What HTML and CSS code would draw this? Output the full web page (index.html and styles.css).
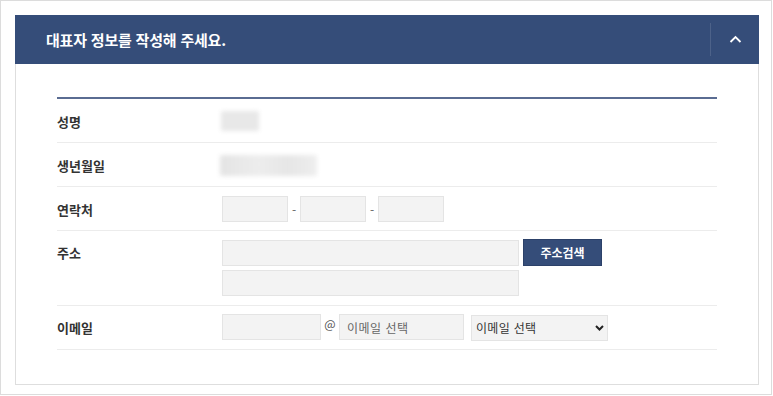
FILE: index.html
```html
<!doctype html>
<html lang="ko">
<head>
<meta charset="utf-8">
<title>대표자 정보</title>
<link rel="stylesheet" href="styles.css">
</head>
<body>
  <div class="frame">
    <div class="panel">
      <div class="panel-head">
        <h2 class="panel-title">대표자 정보를 작성해 주세요.</h2>
        <button class="toggle" type="button" aria-label="접기">
          <svg width="13" height="8" viewBox="0 0 13 8"><path d="M1.5 7 L6.5 2 L11.5 7" fill="none" stroke="#fff" stroke-width="1.8"/></svg>
        </button>
      </div>

      <div class="panel-body">
        <div class="form">
          <div class="row">
            <div class="label">성명</div>
            <div class="value"><span class="blur blur-name"></span></div>
          </div>

          <div class="row">
            <div class="label">생년월일</div>
            <div class="value"><span class="blur blur-birth"></span></div>
          </div>

          <div class="row">
            <div class="label">연락처</div>
            <div class="value">
              <input class="inp inp-phone" type="text">
              <span class="sep">-</span>
              <input class="inp inp-phone" type="text">
              <span class="sep">-</span>
              <input class="inp inp-phone" type="text">
            </div>
          </div>

          <div class="row row-top">
            <div class="label">주소</div>
            <div class="value stack">
              <div class="line">
                <input class="inp inp-addr" type="text">
                <button class="btn" type="button">주소검색</button>
              </div>
              <div class="line">
                <input class="inp inp-addr" type="text">
              </div>
            </div>
          </div>

          <div class="row row-last">
            <div class="label">이메일</div>
            <div class="value">
              <input class="inp inp-mail" type="text">
              <span class="at">@</span>
              <input class="inp inp-domain" type="text" placeholder="이메일 선택">
              <span class="select-wrap">
                <select class="sel">
                  <option>이메일 선택</option>
                </select>
                <svg class="caret" width="9" height="6" viewBox="0 0 9 6"><path d="M1 1 L4.5 4.5 L8 1" fill="none" stroke="#222" stroke-width="2"/></svg>
              </span>
            </div>
          </div>
        </div>
      </div>
    </div>
  </div>
</body>
</html>
```

FILE: styles.css
```css
html, body { margin:0; padding:0; background:#fff; }

body {
  font-family: "Noto Sans CJK KR", "Noto Sans", sans-serif;
  color:#333;
}

.frame {
  box-sizing:border-box;
  width:772px;
  height:395px;
  border:1px solid #dcdcdc;
  padding:14px 12px 0 14px;
}

.panel {
  border:1px solid #dedede;
  border-top:none;
}

.panel-head {
  display:flex;
  align-items:center;
  justify-content:space-between;
  height:49px;
  margin:0 -1px;
  background:#354d79;
}

.panel-title {
  margin:0 0 0 31px;
  font-size:15px;
  font-weight:bold;
  color:#fff;
  letter-spacing:-0.2px;
}

.toggle {
  display:flex;
  align-items:center;
  justify-content:center;
  width:49px;
  height:33px;
  padding:0 0 2px 0;
  background:none;
  border:none;
  border-left:1px solid rgba(255,255,255,.12);
}

.panel-body {
  padding:33px 41px 34px 41px;
}

.form {
  border-top:2px solid #5a6c92;
}

.row {
  display:flex;
  align-items:center;
  min-height:26px;
  padding:9px 0 8px 0;
  border-bottom:1px solid #ececec;
}

.row-top {
  align-items:flex-start;
  padding-bottom:9px;
}

.row-top .label {
  line-height:26px;
}

.row-last {
  padding:8px 0;
}

.label {
  width:165px;
  flex:none;
  font-size:13px;
  font-weight:bold;
  color:#333;
}

.value {
  display:flex;
  align-items:center;
}

.stack {
  flex-direction:column;
  align-items:flex-start;
  gap:4px;
}

.line {
  display:flex;
  align-items:center;
  gap:4px;
}

.blur {
  display:block;
  height:20px;
  background:#e8e8e8;
  filter:blur(2px);
  border-radius:2px;
}

.blur-name { width:38px; margin-left:-1px; }
.blur-birth { width:97px; height:21px; margin-left:-2px; background:linear-gradient(90deg, #e4e4e4, #ededed 40%, #e6e6e6 70%, #eee); }

.inp {
  box-sizing:border-box;
  height:26px;
  margin:0;
  padding:0 7px;
  background:#f3f3f3;
  border:1px solid #e4e4e4;
  font-family:inherit;
  font-size:12px;
  color:#333;
  outline:none;
}

.inp::placeholder { color:#666; letter-spacing:0.5px; }

.inp-phone { width:66px; }
.inp-addr { width:297px; }
.inp-mail { width:99px; }
.inp-domain { width:125px; }

.sep {
  width:12px;
  text-align:center;
  font-size:12px;
  color:#666;
}

.at {
  width:18px;
  text-align:center;
  font-size:12px;
  color:#555;
  margin-top:-8px;
}

.btn {
  box-sizing:border-box;
  width:79px;
  height:27px;
  margin:-1px 0 0 0;
  padding:0;
  background:#354d79;
  border:1px solid #2c4169;
  color:#fff;
  font-family:inherit;
  font-size:12px;
  font-weight:bold;
}

.select-wrap {
  position:relative;
  display:inline-block;
  margin-left:7px;
}

.sel {
  box-sizing:border-box;
  width:137px;
  height:26px;
  margin:0;
  padding:0 4px;
  -webkit-appearance:none;
  appearance:none;
  background:#f3f3f3;
  border:1px solid #e4e4e4;
  border-radius:0;
  font-family:inherit;
  font-size:12px;
  color:#333;
  letter-spacing:0.3px;
  outline:none;
}

.caret {
  position:absolute;
  right:4px;
  top:11px;
  pointer-events:none;
}
```
